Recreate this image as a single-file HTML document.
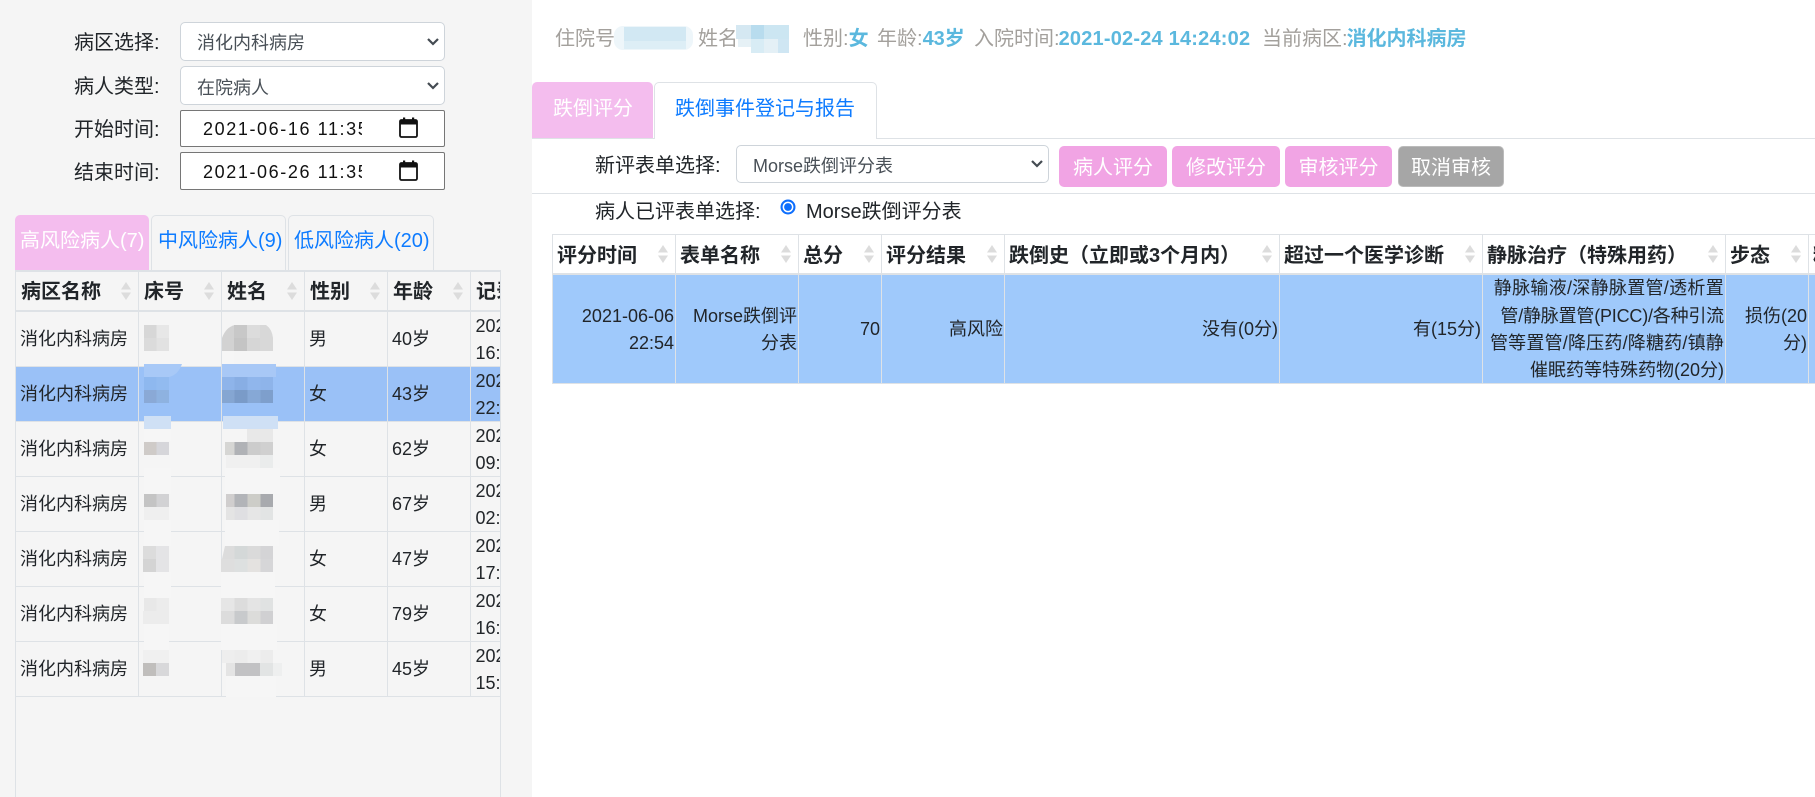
<!DOCTYPE html>
<html lang="zh">
<head>
<meta charset="utf-8">
<title>跌倒评分</title>
<style>
html,body{margin:0;padding:0}
body{width:1815px;height:797px;overflow:hidden;position:relative;background:#fff;font-family:"Liberation Sans","Noto Sans CJK SC",sans-serif;color:#212529}
div{box-sizing:border-box}
.a{position:absolute}
.t{position:absolute;white-space:nowrap;height:30px;line-height:30px;font-size:20px}
.s{font-size:18px}
.b{font-weight:700}
.g{color:#a3a09c}
.c{color:#5bb8de;font-weight:700}
.l{color:#0d7bff}
.w{color:#fff}
.sel{position:absolute;background:#fff;border:1px solid #ced4da;border-radius:5px}
.dt{position:absolute;left:180px;width:265px;background:#fff;border:1px solid #767676;border-radius:2px}
.tab{position:absolute;border:1px solid #dee2e6;border-bottom:0;border-radius:5px 5px 0 0}
.pink{background:#f4bdee;border-color:#f4bdee}
.btn{position:absolute;top:146px;height:41px;background:#f1a4e4;border-radius:5px;color:#fff;font-size:20px;line-height:44px;text-align:center}
.ln{position:absolute;background:#dee2e6}
.clip{position:absolute;overflow:hidden}
.ic{position:absolute}
</style>
</head>
<body>

<!-- left panel -->
<div class="a" style="left:0;top:0;width:532px;height:797px;background:#f5f5f5"></div>

<div class="t" style="left:74px;top:28px">病区选择:</div>
<div class="t" style="left:74px;top:72px">病人类型:</div>
<div class="t" style="left:74px;top:115px">开始时间:</div>
<div class="t" style="left:74px;top:158px">结束时间:</div>

<div class="sel" style="left:180px;top:22px;width:265px;height:39px"></div>
<div class="sel" style="left:180px;top:66px;width:265px;height:39px"></div>
<div class="t s" style="left:197px;top:28px;color:#495057">消化内科病房</div>
<div class="t s" style="left:197px;top:73px;color:#495057">在院病人</div>
<svg class="ic" style="left:426px;top:36px" width="14" height="12" viewBox="0 0 14 12"><path d="M2 3l5 5 5-5" fill="none" stroke="#444b52" stroke-width="2.2"/></svg>
<svg class="ic" style="left:426px;top:80px" width="14" height="12" viewBox="0 0 14 12"><path d="M2 3l5 5 5-5" fill="none" stroke="#444b52" stroke-width="2.2"/></svg>

<div class="dt" style="top:110px;height:37px"></div>
<div class="dt" style="top:152px;height:38px"></div>
<div class="clip" style="left:203px;top:110px;width:159px;height:37px"><div class="t s" style="left:0;top:4px;letter-spacing:1.6px;color:#111">2021-06-16 11:35</div></div>
<div class="clip" style="left:203px;top:152px;width:159px;height:38px"><div class="t s" style="left:0;top:5px;letter-spacing:1.6px;color:#111">2021-06-26 11:35</div></div>
<svg class="ic" style="left:399px;top:117px" width="19" height="21" viewBox="0 0 19 21"><rect x="1" y="3" width="17" height="17" rx="1.5" fill="none" stroke="#111" stroke-width="1.8"/><rect x="1" y="3" width="17" height="4.5" fill="#111"/><rect x="4" y="0.5" width="2.2" height="3" fill="#111"/><rect x="13" y="0.5" width="2.2" height="3" fill="#111"/></svg>
<svg class="ic" style="left:399px;top:160px" width="19" height="21" viewBox="0 0 19 21"><rect x="1" y="3" width="17" height="17" rx="1.5" fill="none" stroke="#111" stroke-width="1.8"/><rect x="1" y="3" width="17" height="4.5" fill="#111"/><rect x="4" y="0.5" width="2.2" height="3" fill="#111"/><rect x="13" y="0.5" width="2.2" height="3" fill="#111"/></svg>

<!-- left tabs -->
<div class="tab pink" style="left:15px;top:215px;width:134px;height:55px"></div>
<div class="tab" style="left:151px;top:215px;width:135px;height:55px"></div>
<div class="tab" style="left:288px;top:215px;width:146px;height:55px"></div>
<div class="t w" style="left:20px;top:226px">高风险病人(7)</div>
<div class="t l" style="left:158px;top:226px">中风险病人(9)</div>
<div class="t l" style="left:294px;top:226px">低风险病人(20)</div>

<!-- left table -->
<div class="a" style="left:16px;top:367px;width:484px;height:54px;background:#9ac1f7"></div>
<div class="ln" style="left:15px;top:270px;width:486px;height:2px"></div>
<div class="ln" style="left:15px;top:310px;width:486px;height:2px"></div>
<div class="ln" style="left:15px;top:366px;width:486px;height:1px"></div>
<div class="ln" style="left:15px;top:421px;width:486px;height:1px"></div>
<div class="ln" style="left:15px;top:476px;width:486px;height:1px"></div>
<div class="ln" style="left:15px;top:531px;width:486px;height:1px"></div>
<div class="ln" style="left:15px;top:586px;width:486px;height:1px"></div>
<div class="ln" style="left:15px;top:641px;width:486px;height:1px"></div>
<div class="ln" style="left:15px;top:696px;width:486px;height:1px"></div>
<div class="ln" style="left:15px;top:270px;width:1px;height:527px"></div>
<div class="ln" style="left:500px;top:270px;width:1px;height:527px"></div>
<div class="ln" style="left:138px;top:270px;width:1px;height:426px"></div>
<div class="ln" style="left:221px;top:270px;width:1px;height:426px"></div>
<div class="ln" style="left:304px;top:270px;width:1px;height:426px"></div>
<div class="ln" style="left:387px;top:270px;width:1px;height:426px"></div>
<div class="ln" style="left:470px;top:270px;width:1px;height:426px"></div>

<div class="t b" style="left:21px;top:277px">病区名称</div>
<div class="t b" style="left:144px;top:277px">床号</div>
<div class="t b" style="left:227px;top:277px">姓名</div>
<div class="t b" style="left:310px;top:277px">性别</div>
<div class="t b" style="left:393px;top:277px">年龄</div>

<div class="clip" style="left:471px;top:272px;width:29px;height:424px">
  <div class="t b" style="left:5px;top:5px">记录时间</div>
  <div class="t s" style="left:4.5px;top:39px">2021-06</div><div class="t s" style="left:4.5px;top:66px">16:20</div>
  <div class="t s" style="left:4.5px;top:94px">2021-06</div><div class="t s" style="left:4.5px;top:121px">22:54</div>
  <div class="t s" style="left:4.5px;top:149px">2021-06</div><div class="t s" style="left:4.5px;top:176px">09:12</div>
  <div class="t s" style="left:4.5px;top:204px">2021-06</div><div class="t s" style="left:4.5px;top:231px">02:20</div>
  <div class="t s" style="left:4.5px;top:259px">2021-06</div><div class="t s" style="left:4.5px;top:286px">17:09</div>
  <div class="t s" style="left:4.5px;top:314px">2021-06</div><div class="t s" style="left:4.5px;top:341px">16:20</div>
  <div class="t s" style="left:4.5px;top:369px">2021-06</div><div class="t s" style="left:4.5px;top:396px">15:20</div>
</div>

<div class="t s" style="left:20px;top:324px">消化内科病房</div><div class="t s" style="left:309px;top:324px">男</div><div class="t s" style="left:392px;top:324px">40岁</div>
<div class="t s" style="left:20px;top:379px">消化内科病房</div><div class="t s" style="left:309px;top:379px">女</div><div class="t s" style="left:392px;top:379px">43岁</div>
<div class="t s" style="left:20px;top:434px">消化内科病房</div><div class="t s" style="left:309px;top:434px">女</div><div class="t s" style="left:392px;top:434px">62岁</div>
<div class="t s" style="left:20px;top:489px">消化内科病房</div><div class="t s" style="left:309px;top:489px">男</div><div class="t s" style="left:392px;top:489px">67岁</div>
<div class="t s" style="left:20px;top:544px">消化内科病房</div><div class="t s" style="left:309px;top:544px">女</div><div class="t s" style="left:392px;top:544px">47岁</div>
<div class="t s" style="left:20px;top:599px">消化内科病房</div><div class="t s" style="left:309px;top:599px">女</div><div class="t s" style="left:392px;top:599px">79岁</div>
<div class="t s" style="left:20px;top:654px">消化内科病房</div><div class="t s" style="left:309px;top:654px">男</div><div class="t s" style="left:392px;top:654px">45岁</div>

<!-- mosaics -->
<svg class="a" style="left:0;top:0" width="1815" height="797">
<defs><g id="so"><path d="M-5 -1.5L0 -9 5 -1.5Z" fill="#dcdcdc"/><path d="M-5 1.5L0 9 5 1.5Z" fill="#dcdcdc"/></g></defs>
<use href="#so" x="126" y="291"/><use href="#so" x="209" y="291"/><use href="#so" x="292" y="291"/><use href="#so" x="375" y="291"/><use href="#so" x="458" y="291"/>
<!-- smudges -->
<rect x="144" y="429" width="27" height="12" fill="#f6f6f6"/>
<rect x="144" y="468" width="27" height="26" fill="#f6f6f6"/><rect x="144" y="520" width="27" height="26" fill="#f6f6f6"/>
<rect x="225" y="468" width="55" height="26" fill="#f6f6f6"/><rect x="225" y="520" width="54" height="26" fill="#f6f6f6"/>
<rect x="144" y="572" width="27" height="26" fill="#f6f6f6"/><rect x="144" y="624" width="25" height="26" fill="#f6f6f6"/>
<rect x="221" y="572" width="54" height="26" fill="#f6f6f6"/><rect x="221" y="624" width="56" height="26" fill="#f6f6f6"/>
<rect x="226" y="676" width="50" height="21" fill="#f6f6f6"/>
<rect x="222" y="351" width="12" height="15" fill="#f6f6f6"/>
<!-- row 1 -->
<rect x="144" y="325" width="12.5" height="13" fill="#d7d7d7"/><rect x="156.5" y="325" width="12.5" height="13" fill="#e7e7e7"/>
<rect x="144" y="338" width="12.5" height="13" fill="#dbdbdb"/><rect x="156.5" y="338" width="12.5" height="13" fill="#e2e2e2"/>
<path d="M222 351V338Q226 327 235 325H235V351Z" fill="#d2d2d2"/><rect x="234" y="325" width="13" height="13" fill="#c8c8c8"/><rect x="247" y="325" width="13" height="13" fill="#dcdcdc"/><path d="M260 325H266Q272 329 273 338H260Z" fill="#d8d8d8"/>
<rect x="234" y="338" width="13" height="13" fill="#c4c4c4"/><rect x="247" y="338" width="13" height="13" fill="#d6d6d6"/><rect x="260" y="338" width="13" height="13" fill="#d8d8d8"/>
<!-- row 2 -->
<path d="M144 364H182Q178 375 169 377H144Z" fill="#a8c9f7"/>
<rect x="144" y="377" width="12.5" height="13" fill="#8eb8ef"/><rect x="156.5" y="377" width="12.5" height="13" fill="#92bbf0"/>
<rect x="144" y="390" width="12.5" height="13" fill="#8aa9d6"/><rect x="156.5" y="390" width="12.5" height="13" fill="#8eb2e0"/>
<rect x="144" y="416" width="27" height="13" fill="#cfe0f5"/>
<rect x="222" y="364" width="54" height="13" fill="#a8c8f6"/>
<rect x="222" y="377" width="12.5" height="13" fill="#8eb4ea"/><rect x="234.5" y="377" width="13" height="13" fill="#88aee4"/><rect x="247.5" y="377" width="13" height="13" fill="#90b6ec"/><rect x="260.5" y="377" width="12.5" height="13" fill="#8eb4ea"/>
<rect x="222" y="390" width="12.5" height="13" fill="#85a6d2"/><rect x="234.5" y="390" width="13" height="13" fill="#7a9bc8"/><rect x="247.5" y="390" width="13" height="13" fill="#86a8d6"/><rect x="260.5" y="390" width="12.5" height="13" fill="#7e9fcc"/>
<rect x="223" y="416" width="55" height="13" fill="#cfe0f5"/>
<!-- row 3 -->
<rect x="144" y="442" width="12.5" height="13" fill="#cfcbc8"/><rect x="156.5" y="442" width="12.5" height="13" fill="#d6d6da"/>
<rect x="247" y="429" width="26" height="13" fill="#e8e8e8"/>
<rect x="225" y="442" width="9.5" height="13" fill="#d6d6d4"/><rect x="234.5" y="442" width="13" height="13" fill="#b0b2b6"/><rect x="247.5" y="442" width="13" height="13" fill="#cccccc"/><rect x="260.5" y="442" width="12.5" height="13" fill="#d0d0d0"/>
<rect x="226" y="455" width="34" height="13" fill="#f0f0f0"/><rect x="260" y="455" width="13" height="13" fill="#eaecec"/>
<!-- row 4 -->
<rect x="144" y="494" width="12.5" height="13" fill="#c4c4c4"/><rect x="156.5" y="494" width="12.5" height="13" fill="#d2d2d4"/>
<rect x="144" y="507" width="25" height="13" fill="#efefef"/>
<rect x="226" y="494" width="8.5" height="13" fill="#d0cece"/><rect x="234.5" y="494" width="13" height="13" fill="#b2b4b8"/><rect x="247.5" y="494" width="13" height="13" fill="#cdcdc8"/><rect x="260.5" y="494" width="12.5" height="13" fill="#a8aaae"/>
<rect x="226" y="507" width="8.5" height="13" fill="#e4e4e4"/><rect x="234.5" y="507" width="13" height="13" fill="#dfdfe2"/><rect x="247.5" y="507" width="13" height="13" fill="#e6e6e6"/><rect x="260.5" y="507" width="12.5" height="13" fill="#e2e4e4"/>
<!-- row 5 -->
<rect x="143" y="546" width="13" height="13" fill="#dcdcdc"/><rect x="156" y="546" width="13" height="13" fill="#e4e4e6"/>
<rect x="143" y="559" width="13" height="13" fill="#d4d4d4"/><rect x="156" y="559" width="13" height="13" fill="#e4e4e6"/>
<path d="M225 546H234.5V559H222Z" fill="#dcdcdc"/><rect x="234.5" y="546" width="13" height="13" fill="#d4d8d8"/><rect x="247.5" y="546" width="13" height="13" fill="#dadada"/><rect x="260.5" y="546" width="12.5" height="13" fill="#d4d4d6"/>
<rect x="221" y="559" width="13.5" height="13" fill="#dedede"/><rect x="234.5" y="559" width="13" height="13" fill="#dde0e0"/><rect x="247.5" y="559" width="13" height="13" fill="#e4e2e0"/><rect x="260.5" y="559" width="12.5" height="13" fill="#d6d6d8"/>
<!-- row 6 -->
<rect x="144" y="598" width="12.5" height="13" fill="#e8e8e8"/><rect x="156.5" y="598" width="12.5" height="13" fill="#ececec"/>
<rect x="143" y="611" width="26" height="13" fill="#ececec"/>
<rect x="221" y="598" width="13.5" height="13" fill="#e6e6e6"/><rect x="234.5" y="598" width="13" height="13" fill="#dcdcdc"/><rect x="247.5" y="598" width="13" height="13" fill="#e4e4e4"/><rect x="260.5" y="598" width="12.5" height="13" fill="#e0e2e2"/>
<rect x="221" y="611" width="13.5" height="13" fill="#dcdcdc"/><rect x="234.5" y="611" width="13" height="13" fill="#c8cacc"/><rect x="247.5" y="611" width="13" height="13" fill="#dcdcda"/><rect x="260.5" y="611" width="12.5" height="13" fill="#d0d0d2"/>
<!-- row 7 -->
<rect x="143" y="650" width="26" height="13" fill="#f0f0f0"/>
<rect x="143" y="663" width="13" height="13" fill="#c0bebc"/><rect x="156" y="663" width="13" height="13" fill="#d8d8da"/>
<rect x="222" y="650" width="12.5" height="13" fill="#eeeeee"/><rect x="234.5" y="650" width="13" height="13" fill="#ececec"/><rect x="247.5" y="650" width="13" height="13" fill="#f0f0f0"/><rect x="260.5" y="650" width="12.5" height="13" fill="#ececec"/>
<rect x="226" y="663" width="9" height="13" fill="#e4e4e4"/><rect x="235" y="663" width="25" height="13" fill="#c2c2c4"/><rect x="260" y="663" width="13" height="13" fill="#e2e4e4"/><rect x="273" y="663" width="9" height="13" fill="#eeefef"/>
</svg>

<!-- right header -->
<div class="t g" style="left:555px;top:24px">住院号</div>
<div class="t g" style="left:698px;top:24px">姓名</div>
<div class="t g" style="left:803px;top:24px">性别:<span class="c">女</span></div>
<div class="t g" style="left:877px;top:24px">年龄:<span class="c">43岁</span></div>
<div class="t g" style="left:974px;top:24px">入院时间:<span class="c" style="letter-spacing:.2px;margin-left:-1px">2021-02-24 14:24:02</span></div>
<div class="t g" style="left:1262px;top:24px">当前病区:<span class="c" style="margin-left:-1px">消化内科病房</span></div>
<svg class="a" style="left:0;top:0" width="1815" height="60">
<rect x="614" y="26" width="79" height="24" rx="9" fill="#eef6fa"/><rect x="624" y="27" width="62" height="14" fill="#d2e8f3"/><rect x="624" y="41" width="62" height="8" fill="#ddeef6"/>
<rect x="736" y="25" width="15" height="14" fill="#d5e8f2"/><rect x="751" y="25" width="13" height="14" fill="#b8dcee"/><rect x="764" y="25" width="25" height="14" fill="#cce6f2"/>
<rect x="738" y="39" width="13" height="8" fill="#e6f1f6"/><rect x="751" y="39" width="13" height="14" fill="#d8ecf5"/><rect x="764" y="39" width="14" height="14" fill="#e4f0f6"/><rect x="778" y="39" width="11" height="14" fill="#cfe6f3"/>
</svg>

<!-- right tabs -->
<div class="ln" style="left:532px;top:138px;width:1283px;height:1px"></div>
<div class="tab pink" style="left:532px;top:82px;width:121px;height:56px"></div>
<div class="tab" style="left:654px;top:82px;width:223px;height:57px;background:#fff;border-bottom:0"></div>
<div class="t w" style="left:553px;top:94px">跌倒评分</div>
<div class="t l" style="left:675px;top:94px">跌倒事件登记与报告</div>

<!-- form row -->
<div class="t" style="left:595px;top:151px">新评表单选择:</div>
<div class="sel" style="left:736px;top:145px;width:313px;height:38px"></div>
<div class="t s" style="left:753px;top:151px;color:#495057">Morse跌倒评分表</div>
<svg class="ic" style="left:1030px;top:158px" width="14" height="12" viewBox="0 0 14 12"><path d="M2 3l5 5 5-5" fill="none" stroke="#444b52" stroke-width="2.2"/></svg>
<div class="btn" style="left:1059px;width:108px">病人评分</div>
<div class="btn" style="left:1172px;width:108px">修改评分</div>
<div class="btn" style="left:1285px;width:107px">审核评分</div>
<div class="btn" style="left:1398px;width:106px;background:#a6a6a6;border:1px solid #bbb;line-height:42px">取消审核</div>
<div class="ln" style="left:532px;top:193px;width:1283px;height:1px"></div>

<div class="t" style="left:595px;top:197px">病人已评表单选择:</div>
<svg class="ic" style="left:780px;top:199px" width="16" height="16" viewBox="0 0 16 16"><circle cx="8" cy="8" r="7.5" fill="#0d6efd"/><circle cx="8" cy="8" r="5.4" fill="#fff"/><circle cx="8" cy="8" r="3.9" fill="#0d6efd"/></svg>
<div class="t" style="left:806px;top:197px">Morse跌倒评分表</div>

<!-- right table -->
<div class="a" style="left:552px;top:275px;width:1263px;height:108px;background:#9fc9fb"></div>
<div class="ln" style="left:552px;top:234px;width:1263px;height:1px"></div>
<div class="ln" style="left:552px;top:273px;width:1263px;height:2px"></div>
<div class="ln" style="left:552px;top:383px;width:1263px;height:1px"></div>
<div class="ln" style="left:552px;top:234px;width:1px;height:150px"></div>
<div class="ln" style="left:675px;top:234px;width:1px;height:150px"></div>
<div class="ln" style="left:798px;top:234px;width:1px;height:150px"></div>
<div class="ln" style="left:881px;top:234px;width:1px;height:150px"></div>
<div class="ln" style="left:1004px;top:234px;width:1px;height:150px"></div>
<div class="ln" style="left:1279px;top:234px;width:1px;height:150px"></div>
<div class="ln" style="left:1482px;top:234px;width:1px;height:150px"></div>
<div class="ln" style="left:1725px;top:234px;width:1px;height:150px"></div>
<div class="ln" style="left:1808px;top:234px;width:1px;height:150px"></div>

<div class="t b" style="left:557px;top:241px">评分时间</div>
<div class="t b" style="left:680px;top:241px">表单名称</div>
<div class="t b" style="left:803px;top:241px">总分</div>
<div class="t b" style="left:886px;top:241px">评分结果</div>
<div class="t b" style="left:1009px;top:241px">跌倒史（立即或3个月内）</div>
<div class="t b" style="left:1284px;top:241px">超过一个医学诊断</div>
<div class="t b" style="left:1487px;top:241px">静脉治疗（特殊用药）</div>
<div class="t b" style="left:1730px;top:241px">步态</div>
<div class="clip" style="left:1809px;top:235px;width:6px;height:38px"><div class="t b" style="left:4px;top:6px">精神状态</div></div>

<svg class="a" style="left:0;top:225px" width="1815" height="50">
<use href="#so" x="663" y="29"/><use href="#so" x="786" y="29"/><use href="#so" x="869" y="29"/><use href="#so" x="992" y="29"/><use href="#so" x="1267" y="29"/><use href="#so" x="1470" y="29"/><use href="#so" x="1713" y="29"/><use href="#so" x="1796" y="29"/>
</svg>

<div class="t s" style="right:1141px;top:301px">2021-06-06</div>
<div class="t s" style="right:1141px;top:328px">22:54</div>
<div class="t s" style="right:1018px;top:301px">Morse跌倒评</div>
<div class="t s" style="right:1018px;top:328px">分表</div>
<div class="t s" style="right:935px;top:314px">70</div>
<div class="t s" style="right:812px;top:314px">高风险</div>
<div class="t s" style="right:537px;top:314px">没有(0分)</div>
<div class="t s" style="right:334px;top:314px">有(15分)</div>
<div class="t s" style="right:91px;top:273px;letter-spacing:.3px">静脉输液/深静脉置管/透析置</div>
<div class="t s" style="right:91px;top:301px;letter-spacing:-.2px">管/静脉置管(PICC)/各种引流</div>
<div class="t s" style="right:91px;top:328px;letter-spacing:.2px">管等置管/降压药/降糖药/镇静</div>
<div class="t s" style="right:91px;top:355px">催眠药等特殊药物(20分)</div>
<div class="t s" style="right:8px;top:301px">损伤(20</div>
<div class="t s" style="right:8px;top:328px">分)</div>

</body>
</html>
